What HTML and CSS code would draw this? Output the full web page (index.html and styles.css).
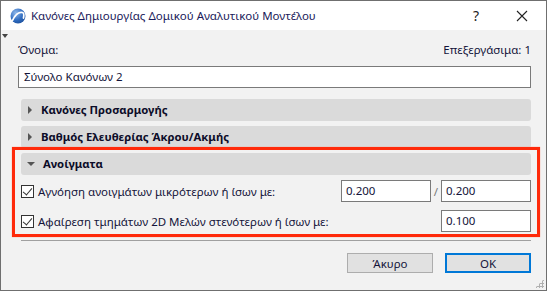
FILE: index.html
```html
<!DOCTYPE html>
<html lang="el">
<head>
    <meta charset="UTF-8">
    <meta name="viewport" content="width=device-width, initial-scale=1.0">
    <title>Κανόνες Δημιουργίας Δομικού Αναλυτικού Μοντέλου</title>
    <link rel="stylesheet" href="styles.css">
</head>
<body>
    <div class="dialog">
        <div class="titlebar">
            <svg class="app-icon" width="16" height="16" viewBox="0 0 16 16">
                <defs>
                    <radialGradient id="ball" cx="0.35" cy="0.3" r="0.8">
                        <stop offset="0" stop-color="#8fb8ea"/>
                        <stop offset="0.6" stop-color="#2f6cc0"/>
                        <stop offset="1" stop-color="#1d4f9a"/>
                    </radialGradient>
                </defs>
                <circle cx="8" cy="8" r="7.5" fill="url(#ball)"/>
                <path d="M2.5 12.5 C5 7 9 3.5 12.5 4.5 C14 5 14 7.5 13.5 10" fill="none" stroke="#fff" stroke-width="1.8" stroke-linecap="round"/>
            </svg>
            <span class="title">Κανόνες Δημιουργίας Δομικού Αναλυτικού Μοντέλου</span>
            <span class="tb-btn help">?</span>
            <span class="tb-btn close">
                <svg width="12" height="12" viewBox="0 0 12 12"><path d="M1 1 L11 11 M11 1 L1 11" stroke="#222" stroke-width="1.1"/></svg>
            </span>
        </div>
        <div class="body">
            <span class="corner-mark"></span>
            <div class="name-row">
                <span>Όνομα:</span>
                <span>Επεξεργάσιμα: 1</span>
            </div>
            <div class="field name-field">Σύνολο Κανόνων 2</div>

            <div class="section">
                <span class="tri right"></span>Κανόνες Προσαρμογής
            </div>
            <div class="section">
                <span class="tri right"></span>Βαθμός Ελευθερίας Άκρου/Ακμής
            </div>
            <div class="section">
                <span class="tri down"></span>Ανοίγματα
            </div>

            <div class="opt-row">
                <span class="check"></span>
                <span class="opt-label">Αγνόηση ανοιγμάτων μικρότερων ή ίσων με:</span>
                <div class="field num">0.200</div>
                <span class="slash">/</span>
                <div class="field num">0.200</div>
            </div>
            <div class="opt-row">
                <span class="check"></span>
                <span class="opt-label">Αφαίρεση τμημάτων 2D Μελών στενότερων ή ίσων με:</span>
                <div class="field num">0.100</div>
            </div>

            <div class="separator"></div>

            <div class="buttons">
                <button class="btn">Άκυρο</button>
                <button class="btn default">OK</button>
            </div>

            <div class="highlight"></div>
            <span class="grip"></span>
        </div>
    </div>
</body>
</html>
```

FILE: styles.css
```css
html, body {
    margin: 0;
    padding: 0;
}
body {
    font-family: "Noto Sans", "DejaVu Sans", sans-serif;
    font-size: 11.5px;
    color: #14143a;
    background-color: #f2f2f2;
}
.dialog {
    width: 547px;
    height: 291px;
    box-sizing: border-box;
    border: 1px solid #6f6f6f;
    background-color: #f2f2f2;
    display: flex;
    flex-direction: column;
}
.titlebar {
    height: 29px;
    background-color: #fff;
    display: flex;
    align-items: center;
    padding-left: 9px;
}
.app-icon {
    flex: none;
    margin-right: 5px;
}
.title {
    flex: 1;
    color: #1a1a5a;
    white-space: nowrap;
}
.tb-btn {
    width: 44px;
    text-align: center;
    font-size: 14px;
    color: #222;
}
.help {
    margin-right: 2px;
}
.close {
    display: flex;
    justify-content: center;
    margin-right: 2px;
}
.body {
    position: relative;
    flex: 1;
    padding: 12px 15px 0 17px;
}
.corner-mark {
    position: absolute;
    left: 1px;
    top: 4px;
    border-left: 3px solid transparent;
    border-right: 3px solid transparent;
    border-top: 4px solid #444;
}
.name-row {
    display: flex;
    justify-content: space-between;
    height: 16px;
    line-height: 16px;
    margin-bottom: 8px;
}
.field {
    box-sizing: border-box;
    height: 22px;
    line-height: 20px;
    border: 1px solid #7a7a7a;
    background-color: #fff;
    padding-left: 5px;
    white-space: nowrap;
}
.name-field {
    margin-bottom: 11px;
}
.section {
    margin-left: 3px;
    height: 22px;
    line-height: 22px;
    background-color: #dadada;
    border-radius: 3px;
    font-size: 11.3px;
    font-weight: bold;
    color: #0c0c28;
    margin-bottom: 5px;
    display: flex;
    align-items: center;
}
.tri {
    width: 0;
    height: 0;
    margin-left: 7px;
    margin-right: 9px;
}
.tri.right {
    border-top: 4px solid transparent;
    border-bottom: 4px solid transparent;
    border-left: 4px solid #555;
}
.tri.down {
    margin-left: 6px;
    margin-right: 8px;
    border-left: 4px solid transparent;
    border-right: 4px solid transparent;
    border-top: 4px solid #555;
}
.opt-row {
    margin-left: 3px;
    display: flex;
    align-items: center;
    height: 22px;
    margin-bottom: 8px;
}
.check {
    flex: none;
    width: 11px;
    height: 11px;
    border: 1px solid #333;
    background-color: #fff;
    position: relative;
    margin-right: 4px;
}
.check::after {
    content: "";
    position: absolute;
    left: 3px;
    top: 0;
    width: 4px;
    height: 8px;
    border-right: 1.5px solid #333;
    border-bottom: 1.5px solid #333;
    transform: rotate(40deg);
}
.opt-label {
    flex: 1;
    white-space: nowrap;
}
.num {
    width: 90px;
    padding-left: 4px;
}
.slash {
    width: 10px;
    text-align: center;
    color: #777;
}
.separator {
    margin: 5px 0 0 3px;
    height: 1px;
    background-color: #a0a0a0;
}
.buttons {
    display: flex;
    justify-content: flex-end;
    gap: 12px;
    margin-top: 12px;
}
.btn {
    box-sizing: border-box;
    width: 86px;
    height: 20px;
    font-family: "Noto Sans", "DejaVu Sans", sans-serif;
    font-size: 11.5px;
    color: #14143a;
    background-color: #e1e1e1;
    border: 1px solid #adadad;
    padding: 0;
}
.btn.default {
    border: 2px solid #0078d7;
}
.highlight {
    position: absolute;
    left: 11px;
    top: 117px;
    width: 522px;
    height: 84px;
    border: 3px solid #ff2a0a;
    box-shadow: 0 0 1px #ff8a70;
    pointer-events: none;
}
.grip {
    position: absolute;
    right: 2px;
    bottom: 2px;
    width: 9px;
    height: 9px;
    background:
        radial-gradient(circle, #b0b0b0 1px, transparent 1.2px) 0 0 / 3px 3px;
    clip-path: polygon(100% 0, 100% 100%, 0 100%);
}
```
